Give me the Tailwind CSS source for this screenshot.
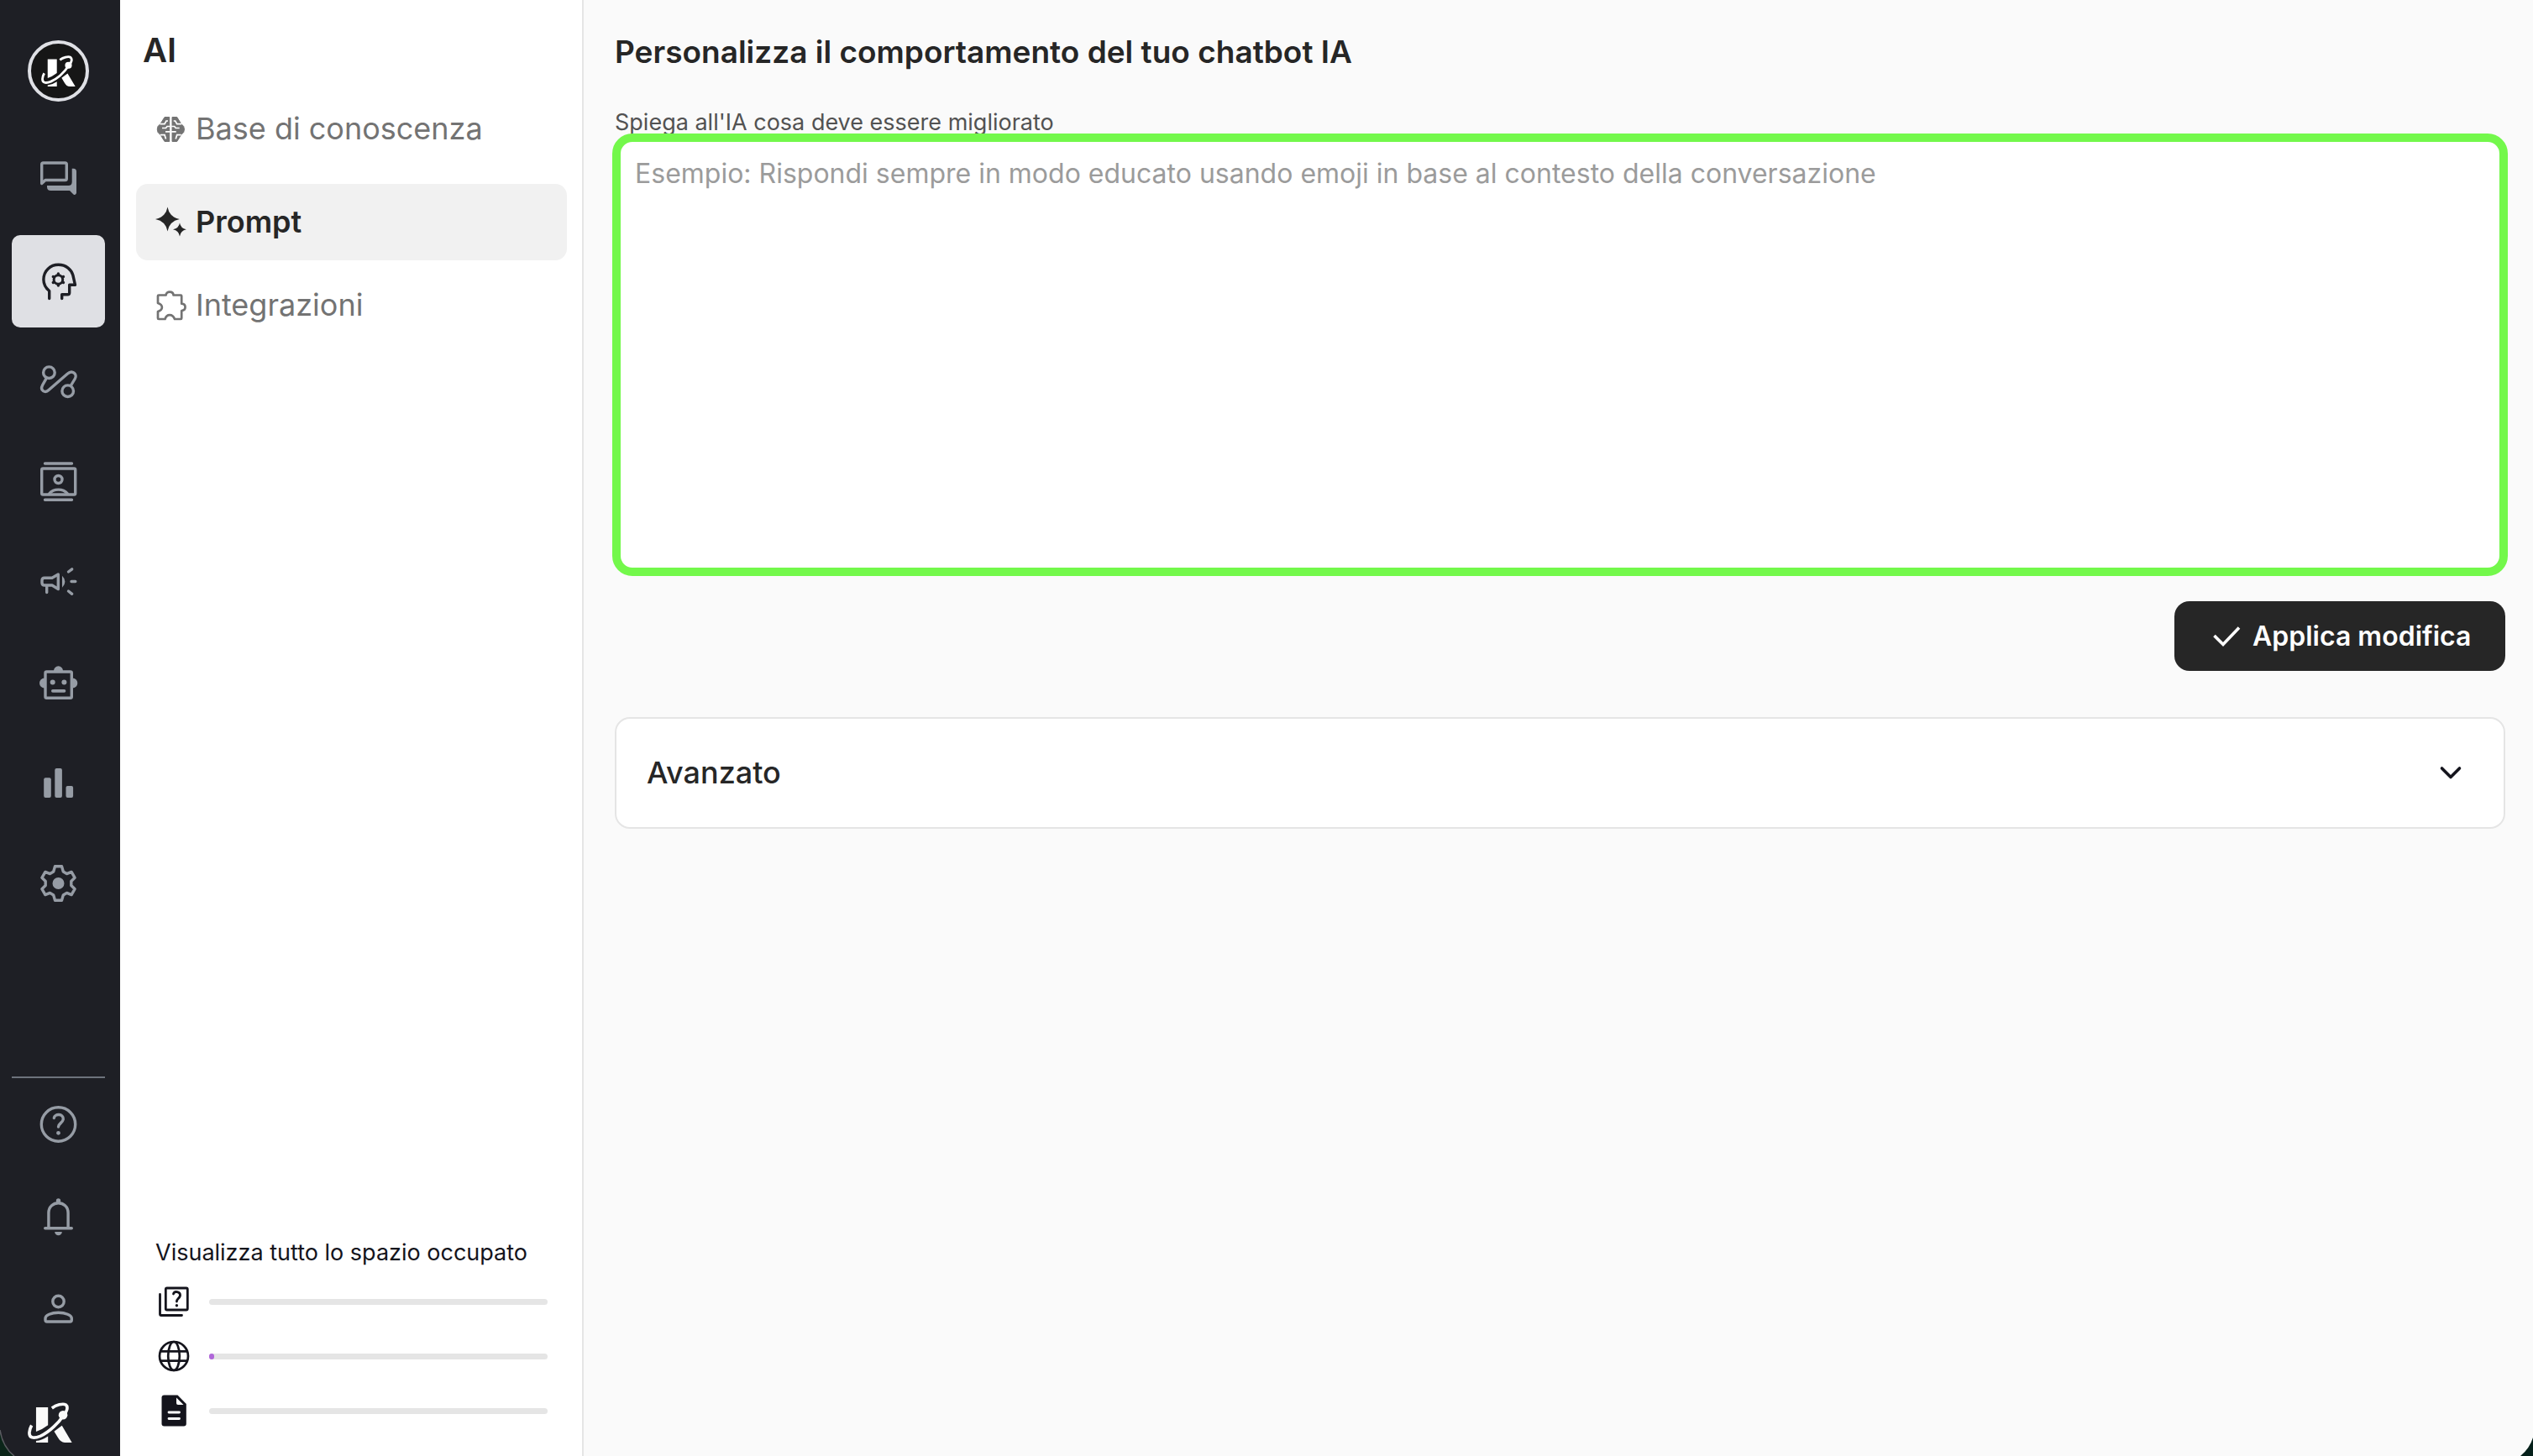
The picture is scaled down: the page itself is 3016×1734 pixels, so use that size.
<!DOCTYPE html>
<html lang="it">
<head>
<meta charset="utf-8">
<title>Prompt</title>
<script src="https://cdn.jsdelivr.net/npm/@tailwindcss/browser@4"></script>
</head>
<body class="font-['Inter','Open_Sans',sans-serif] bg-[#fafafa] text-[#262626]">
<svg class="hidden" aria-hidden="true">
  <symbol id="logo" viewBox="0 0 160 145">
    <g fill="currentColor"><path d="M30 18H73V82Q52 98 30 106Z"/><path d="M30 145V139Q52 136 73 122V145Z"/><path d="M123 84L159 145H133Q118 144 109 128L95 105Z"/><circle cx="127" cy="46" r="16"/></g>
    <path d="M87 21C102 10 126 3 137 9C146 16 142 34 128 48C112 72 80 106 45 122C20 132 4 128 6 108C7 98 10 90 14 83" fill="none" stroke="currentColor" stroke-width="11"/>
  </symbol>
  <symbol id="gear" viewBox="-24 -24 48 48">
    <path d="M-4-20.3H4L5.8-14L10-11.4L15.6-13.6L19.6-6.7L15.3-2.6V2.6L19.6 6.7L15.6 13.6L10 11.4L5.8 14L4 20.3H-4L-5.8 14L-10 11.4L-15.6 13.6L-19.6 6.7L-15.3 2.6V-2.6L-19.6-6.7L-15.6-13.6L-10-11.4L-5.8-14Z" fill="none" stroke="currentColor" stroke-width="3.4" stroke-linejoin="round"/>
  </symbol>
</svg>
<div class="flex min-h-screen">
  <aside class="flex w-[143px] shrink-0 flex-col bg-[#1e1f25] pt-12 pr-[18px] pb-4 pl-[14px] text-[#969ca5]">
    <a href="#" aria-label="Account" class="ml-[19px] flex size-[73px] items-center justify-center rounded-full border-4 border-[#dfe0e5] bg-[#161616] text-white"><svg class="h-[37px] w-[41px]"><use href="#logo"/></svg></a>
    <nav class="mt-[39px] flex h-[947px] flex-col justify-between">
      <a href="#" aria-label="Chat" class="flex h-[110px] items-center justify-center"><svg class="h-[52px] w-[53px]" viewBox="0 1 53 52" fill="none"><path d="M6.7 30.5V7.8Q6.7 6 8.5 6H34.5Q36.3 6 36.3 7.8V24.7Q36.3 26.5 34.5 26.5H11Z" stroke="currentColor" stroke-width="3.4" stroke-linejoin="round"/><path d="M42.7 12.7h1.8q3.5 0 3.5 3.5V42q-1.5 3.5-3.8 1.2L40 39H17.5q-4.5 0-4.5-4.5V33H38.5q4.2 0 4.2-4.2Z" fill="currentColor"/></svg></a>
      <a href="#" aria-label="AI" class="flex h-[110px] items-center justify-center rounded-[10px] bg-[#dfe0e4] text-[#1e1f25]"><svg class="h-[52px] w-[53px]" viewBox="0 0 53 52" fill="none" stroke="currentColor" stroke-width="3.4" stroke-linecap="round" stroke-linejoin="round"><path d="M15.7 46.5V37.5C11.5 34 8.9 29 8.9 24C8.9 13.5 17 6.3 26.5 6.3C36 6.3 42 12.5 43.8 18.5L46.5 30.3H39.7V39.5Q39.7 41.7 37.5 41.7H30.7V46.5"/><circle cx="26.4" cy="24" r="5.3" stroke-width="3"/><path d="M26.4 17V18M26.4 30V31M20.3 20.5L21 20.9M31.8 27.1L32.5 27.5M20.3 27.5L21 27.1M31.8 20.9L32.5 20.5"/></svg></a>
      <a href="#" aria-label="Flussi" class="flex h-[110px] items-center justify-center"><svg class="h-[52px] w-[53px]" viewBox="0 0 53 52" fill="none" stroke="currentColor" stroke-width="3.4" stroke-linecap="round"><circle cx="15.4" cy="15.7" r="6.8"/><circle cx="37.7" cy="37.7" r="6.8"/><path d="M12.3 22.3L7.7 30.5C4 37.5 11 40.5 15 36.5L37.5 17C43 12 49.5 17.5 46.3 23L41.5 31"/></svg></a>
      <a href="#" aria-label="Contatti" class="flex h-[110px] items-center justify-center"><svg class="h-[52px] w-[53px]" viewBox="0 0 53 52" fill="none" stroke="currentColor" stroke-width="3.4" stroke-linecap="round"><path d="M10.5 4H42.5M10.5 47.3H42.5M15.5 40C21 33.5 32 33.5 37.5 40"/><rect x="6.7" y="10" width="40" height="31" rx="1.5"/><circle cx="26.5" cy="23" r="4.5"/></svg></a>
      <a href="#" aria-label="Campagne" class="flex h-[110px] items-center justify-center"><svg class="h-[52px] w-[53px]" viewBox="0 0 53 52" fill="none" stroke="currentColor" stroke-width="3.4" stroke-linecap="round" stroke-linejoin="round"><path d="M19 21.3H10Q7 21.3 7 24.3V27Q7 30 10 30H19L26.3 34.5V17ZM12.7 30.5V38.5M38.5 14L42.7 10.8M42 25.5H46.8M38.5 37L42.7 40.3"/><path d="M31 18.7Q34.4 22 34.4 25.7T31 32.7Z" fill="currentColor" stroke="none"/></svg></a>
      <a href="#" aria-label="Chatbot" class="flex h-[110px] items-center justify-center"><svg class="h-[52px] w-[53px]" viewBox="0 0 53 52" fill="currentColor"><rect x="11" y="13" width="31.3" height="31.3" rx="1.5" fill="none" stroke="currentColor" stroke-width="3.4"/><path d="M21 12A5.5 5.8 0 0 1 32 12ZM10 20.5A6 6 0 0 0 10 32.5ZM43.3 20.5A6 6 0 0 1 43.3 32.5Z"/><circle cx="19.7" cy="25.4" r="3"/><circle cx="33.4" cy="25.4" r="3"/><rect x="18" y="34" width="17.3" height="3.7" rx="1.8"/></svg></a>
      <a href="#" aria-label="Statistiche" class="flex h-[110px] items-center justify-center"><svg class="h-[52px] w-[53px]" viewBox="0 0 53 52" fill="currentColor"><rect x="9.2" y="20.3" width="8.6" height="23.7" rx="2"/><rect x="22.3" y="9" width="8.6" height="35" rx="2"/><rect x="35.5" y="30" width="8.6" height="14" rx="2"/></svg></a>
      <a href="#" aria-label="Impostazioni" class="flex h-[110px] items-center justify-center"><svg class="h-[52px] w-[53px]" viewBox="0 0 53 52"><use href="#gear" x="2.5" y="2" width="48" height="48"/><circle cx="26.5" cy="26" r="7" fill="currentColor"/></svg></a>
    </nav>
    <div class="mt-auto border-t-2 border-[#6d737d]">
      <a href="#" aria-label="Aiuto" class="flex h-[110px] items-center justify-center"><svg class="h-[52px] w-[53px]" viewBox="0 0 53 52" fill="none" stroke="currentColor" stroke-width="3.4" stroke-linecap="round"><circle cx="26.5" cy="26" r="20.2"/><path d="M21.3 18.5C22 13 32.7 13 32.3 20C31.5 24.5 26.5 25 26.5 29"/><circle cx="26.5" cy="36.3" r="2.4" fill="currentColor" stroke="none"/></svg></a>
      <a href="#" aria-label="Notifiche" class="flex h-[110px] items-center justify-center"><svg class="h-[52px] w-[53px]" viewBox="0 0 53 52" fill="none" stroke="currentColor" stroke-width="3.4" stroke-linecap="round"><path d="M14.9 39.5V21.5C14.9 5.8 38.1 5.8 38.1 21.5V39.5M10.7 39.7H42.3"/><circle cx="26.5" cy="7" r="2.7" fill="currentColor" stroke="none"/><path d="M22.2 44H30.8A4.3 4.3 0 0 1 22.2 44Z" fill="currentColor" stroke="none"/></svg></a>
      <a href="#" aria-label="Profilo" class="flex h-[110px] items-center justify-center"><svg class="h-[52px] w-[53px]" viewBox="0 0 53 52" fill="none" stroke="currentColor" stroke-width="3.4"><circle cx="26.5" cy="17" r="6.7"/><path d="M11 39V37C11 33.5 18 30.2 26.5 30.2S42.3 33.5 42.3 37V39Q42.3 41 40.3 41H13Q11 41 11 39Z"/></svg></a>
      <a href="#" aria-label="Home" class="mt-14 ml-[19px] block text-[#fafafa]"><svg class="h-12 w-[53px]"><use href="#logo"/></svg></a>
    </div>
  </aside>

  <section class="flex w-[552px] shrink-0 flex-col border-r-2 border-[#e5e5e5] bg-white pt-9 pr-[18px] pb-8 pl-[19px]">
    <h2 class="pl-2 text-[40px] leading-12 font-semibold">AI</h2>
    <ul class="mt-6 text-[36px] leading-[44px] text-[#737373]">
      <li><a href="#" class="flex h-[91px] items-center gap-[10px] rounded-[14px] pb-[2px] pl-[21px]"><svg class="size-10" viewBox="0 0 40 40"><path d="M18.700 6.500H13L8 14.500L5 17.500Q3.500 21 5 24.500L8 27.500L13 35.500H18.700ZM22 6.500H27.700L32.700 14.500L35.700 17.500Q37.200 21 35.700 24.500L32.700 27.500L27.700 35.500H22Z" fill="currentColor" stroke="currentColor" stroke-linejoin="round"/><path d="M7.500 14.700H13L15 11H17M33.200 14.700H27.700L25.700 11H23.700M19.500 17.500H16L14.500 19.500H10M21.200 17.500H24.700L26.200 19.500H30.700M14 23.800H19.500M26.700 23.800H21.200M8 27.700H13L14.500 32.500M32.700 27.700H27.700L26.200 32.500" fill="none" stroke="#fff" stroke-width="1.700"/></svg>Base di conoscenza</a></li>
      <li class="mt-5"><a href="#" class="flex h-[91px] items-center gap-[10px] rounded-[14px] bg-[#f1f1f1] pb-[2px] pl-[21px] font-semibold text-[#262626]"><svg class="size-10" viewBox="0 0 40 40" fill="currentColor"><path d="M16.5 2.5Q18.5 14.5 30.8 17Q18.5 19.5 16.5 31.5Q14.5 19.5 2 17Q14.5 14.5 16.5 2.5ZM31 21.5Q32.2 28 38.8 29.3Q32.2 30.6 31 37.5Q29.8 30.6 23 29.3Q29.8 28 31 21.5Z"/></svg>Prompt</a></li>
      <li class="mt-2"><a href="#" class="flex h-[91px] items-center gap-[10px] rounded-[14px] pb-[2px] pl-[21px]"><svg class="size-10" viewBox="0 0 40 40" fill="none" stroke="currentColor" stroke-width="2.7" stroke-linejoin="round"><path d="M5 9.5Q5 8.5 6 8.5H14.6C14.8 3.4 23.2 3.4 23.5 8.5H32.2Q33.2 8.5 33.2 9.5V18.7C39 19 39 26.5 33.2 27V36Q33.2 37 32.2 37H25C22.5 30.5 15.5 30.5 13.5 37H6Q5 37 5 36V28C11.5 26 11.5 20 5 18Z"/></svg>Integrazioni</a></li>
    </ul>
    <div class="mt-auto px-[23px] text-[#14141c]">
      <h3 class="text-[27px] leading-9">Visualizza tutto lo spazio occupato</h3>
      <div class="mt-[18px] flex flex-col gap-[21px]">
        <div class="flex items-center gap-5"><svg class="size-11" viewBox="0 0 44 44" fill="none" stroke="currentColor" stroke-width="2.8" stroke-linecap="round"><rect x="12.3" y="6" width="26" height="26" rx="1.5"/><path d="M5.5 13.5V37Q5.5 38.5 7 38.5H31.5M21.5 13C22.5 9 30 10 29.5 15C28.5 18.5 25.4 19 25.4 22"/><circle cx="25.4" cy="26.8" r="1.7" fill="currentColor" stroke="none"/></svg><div class="h-[7px] flex-1 rounded-full bg-[#e5e5e5]"></div></div>
        <div class="flex items-center gap-5"><svg class="size-11" viewBox="0 0 44 44" fill="none" stroke="currentColor" stroke-width="2.7"><circle cx="22" cy="22" r="17"/><ellipse cx="22" cy="22" rx="6.8" ry="17"/><path d="M6 16.3H38M6 27.7H38"/></svg><div class="h-[7px] flex-1 rounded-full bg-[#e5e5e5]"><div class="h-full w-[6px] rounded-full bg-[#b067d9]"></div></div></div>
        <div class="flex items-center gap-5"><svg class="size-11" viewBox="0 0 44 44"><path d="M10.5 3.5H26.5L36.8 14V37.5Q36.8 40.5 33.8 40.5H10.5Q7.5 40.5 7.5 37.5V6.5Q7.5 3.5 10.5 3.5Z" fill="currentColor"/><path d="M25 6.5L33.5 15H27Q25 15 25 13Z" fill="#fff"/><path d="M16 24H28.5M16 31.5H28.5" stroke="#fff" stroke-width="2.8" stroke-linecap="round"/></svg><div class="h-[7px] flex-1 rounded-full bg-[#e5e5e5]"></div></div>
      </div>
    </div>
  </section>

  <main class="flex min-w-0 flex-1 flex-col pt-[38px] pr-[33px] pl-[37px]">
    <h1 class="text-[37px] leading-[48px] font-semibold">Personalizza il comportamento del tuo chatbot IA</h1>
    <label for="prompt" class="mt-10 text-[27px] leading-10 text-[#525252]">Spiega all'IA cosa deve essere migliorato</label>
    <textarea id="prompt" class="relative -mx-[3px] -mt-[7px] h-[527px] resize-none rounded-[24px] border-10 border-[#73f84b] bg-white px-[17px] py-4 text-[32px] leading-11 outline-none placeholder:text-[#9b9b9b]" placeholder="Esempio: Rispondi sempre in modo educato usando emoji in base al contesto della conversazione"></textarea>
    <button class="mt-[30px] flex h-[83px] w-[394px] items-center gap-2 self-end rounded-[18px] bg-[#262626] pl-[41px] text-[32px] leading-11 font-semibold text-white"><svg class="size-11 shrink-0" viewBox="0 0 44 44" fill="none" stroke="currentColor" stroke-width="3.6"><path d="M6.5 21L17 31.5L36 11.5"/></svg>Applica modifica</button>
    <button class="mt-[55px] flex h-[133px] items-center justify-between rounded-[18px] border-2 border-[#e5e5e5] bg-white pr-[43px] pb-[2px] pl-[36px] text-[36px] leading-[48px] font-medium">Avanzato<svg class="size-10" viewBox="0 0 40 40" fill="none" stroke="#14141c" stroke-width="3.6" stroke-linecap="round" stroke-linejoin="round"><path d="M9.500 15L20 25.500L30.500 15"/></svg></button>
  </main>
</div>
<svg class="fixed bottom-0 left-0 h-10 w-6" viewBox="0 0 24 40" aria-hidden="true"><path d="M0 9Q3 29 17 40H0Z" fill="#0b2519"/><path d="M0 9Q3 29 17 40" fill="none" stroke="#5a5b60" stroke-width="1.5"/></svg>
<svg class="fixed right-0 bottom-0 h-6 w-5" viewBox="0 0 20 24" aria-hidden="true"><path d="M20 2Q16 15 5 24H20Z" fill="#05201a"/></svg>
</body>
</html>
